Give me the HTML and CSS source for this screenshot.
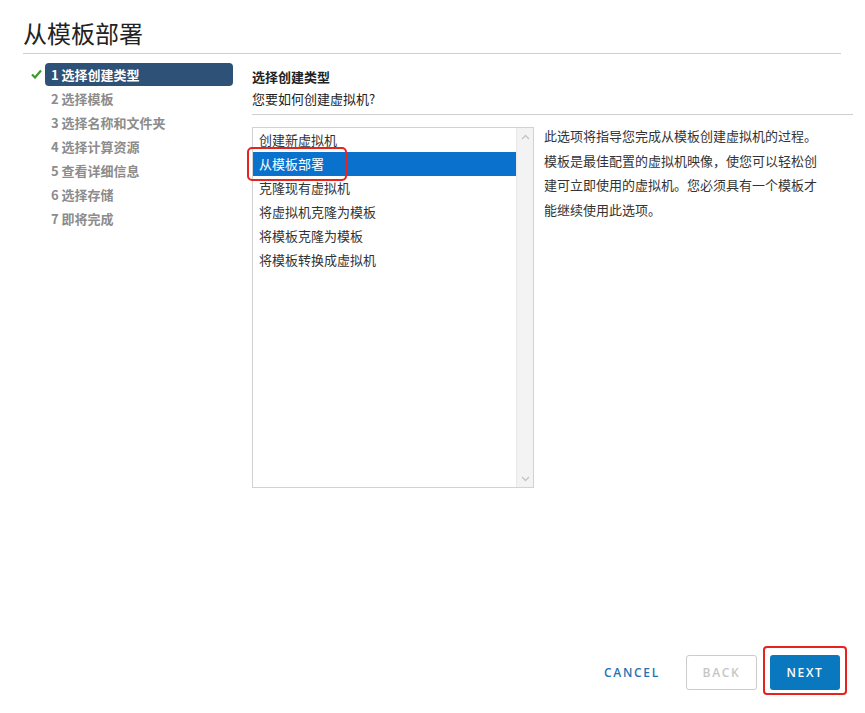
FILE: index.html
```html
<!DOCTYPE html>
<html lang="zh-CN">
<head>
  <meta charset="UTF-8" />
  <title>从模板部署</title>
  <link rel="stylesheet" href="styles.css">
</head>
<body>
  <div class="dialog">
    <div class="dialog-header">
      <h1>从模板部署</h1>
    </div>

    <div class="dialog-body">
      <ul class="steps">
        <li class="step done active">
          <svg class="check" width="11" height="10" viewBox="0 0 11 10"><path d="M1 5.5 L4 8.5 L10 1.5" fill="none" stroke="#3c9a2e" stroke-width="2.2"/></svg>
          <span class="step-label">1 选择创建类型</span>
        </li>
        <li class="step"><span class="step-label">2 选择模板</span></li>
        <li class="step"><span class="step-label">3 选择名称和文件夹</span></li>
        <li class="step"><span class="step-label">4 选择计算资源</span></li>
        <li class="step"><span class="step-label">5 查看详细信息</span></li>
        <li class="step"><span class="step-label">6 选择存储</span></li>
        <li class="step"><span class="step-label">7 即将完成</span></li>
      </ul>

      <div class="content">
        <div class="content-title">选择创建类型</div>
        <div class="content-sub">您要如何创建虚拟机?</div>

        <div class="content-main">
          <div class="listbox">
            <ul class="options">
              <li>创建新虚拟机</li>
              <li class="selected">从模板部署<span class="mark"></span></li>
              <li>克隆现有虚拟机</li>
              <li>将虚拟机克隆为模板</li>
              <li>将模板克隆为模板</li>
              <li>将模板转换成虚拟机</li>
            </ul>
            <div class="scrollbar">
              <svg width="9" height="6" viewBox="0 0 9 6"><path d="M1 5 L4.5 1.5 L8 5" fill="none" stroke="#c4c4c4" stroke-width="1.3"/></svg>
              <svg width="9" height="6" viewBox="0 0 9 6"><path d="M1 1 L4.5 4.5 L8 1" fill="none" stroke="#c4c4c4" stroke-width="1.3"/></svg>
            </div>
          </div>
          <p class="description">此选项将指导您完成从模板创建虚拟机的过程。模板是最佳配置的虚拟机映像，使您可以轻松创建可立即使用的虚拟机。您必须具有一个模板才能继续使用此选项。</p>
        </div>
      </div>
    </div>

    <div class="dialog-footer">
      <button class="btn btn-link">CANCEL</button>
      <button class="btn btn-outline" disabled>BACK</button>
      <span class="next-wrap"><button class="btn btn-primary">NEXT</button></span>
    </div>
  </div>
</body>
</html>
```

FILE: styles.css
```css
body {
  margin: 0;
  background: #fff;
  font-family: "Noto Sans CJK SC", "Noto Sans", sans-serif;
  color: #333;
}

.dialog {
  width: 865px;
  height: 713px;
  box-sizing: border-box;
  padding: 0 24px 0 23px;
  display: flex;
  flex-direction: column;
}

.dialog-header {
  border-bottom: 1px solid #cfcfcf;
  height: 54px;
  box-sizing: border-box;
}

h1 {
  margin: 0;
  padding-top: 16px;
  font-size: 24px;
  font-weight: 400;
  line-height: 34px;
  color: #222;
}

.dialog-body {
  flex: 1;
  display: flex;
  padding-top: 8px;
}

.steps {
  list-style: none;
  margin: 0;
  padding: 0;
  width: 210px;
  flex-shrink: 0;
}

.step {
  display: flex;
  align-items: center;
  height: 24px;
  padding-left: 22px;
  position: relative;
}

.check {
  position: absolute;
  left: 8px;
  top: 7px;
}

.step-label {
  flex: 1;
  height: 23px;
  line-height: 23px;
  padding-left: 6px;
  font-size: 13px;
  font-weight: 700;
  color: #8c8c8c;
  border-radius: 4px;
}

.step.active .step-label {
  background: #2d5177;
  color: #fff;
}

.content {
  flex: 1;
  padding-left: 19px;
  margin-right: -12px;
}

.content-title {
  font-size: 13px;
  font-weight: 700;
  color: #222;
  line-height: 18px;
  margin-top: 6px;
}

.content-sub {
  font-size: 13px;
  color: #222;
  line-height: 18px;
  margin-top: 4px;
  padding-bottom: 6px;
  border-bottom: 1px solid #cfcfcf;
}

.content-main {
  display: flex;
  margin-top: 12px;
}

.listbox {
  width: 282px;
  height: 361px;
  box-sizing: border-box;
  border: 1px solid #d2d2d2;
  display: flex;
}

.options {
  list-style: none;
  margin: 0;
  padding: 0;
  flex: 1;
}

.options li {
  position: relative;
  height: 24px;
  line-height: 24px;
  padding-left: 6px;
  font-size: 13px;
  color: #333;
}

.options li.selected {
  background: #0a72cc;
  color: #fff;
}

.mark {
  position: absolute;
  left: -6px;
  top: -5px;
  width: 96px;
  height: 30px;
  border: 2px solid #e8221e;
  border-radius: 5px;
}

.scrollbar {
  width: 16px;
  background: #f3f3f3;
  border-left: 1px solid #e8e8e8;
  display: flex;
  flex-direction: column;
  justify-content: space-between;
  align-items: center;
  padding: 6px 0 5px;
}

.description {
  width: 282px;
  margin: -3px 0 0 10px;
  font-size: 13px;
  line-height: 24.5px;
  color: #333;
}

.dialog-footer {
  display: flex;
  justify-content: flex-end;
  align-items: center;
  gap: 12px;
  padding-right: 1px;
  height: 58px;
  margin-bottom: 12px;
}

.btn {
  font-family: "Open Sans", "Liberation Sans", sans-serif;
  font-size: 12px;
  font-weight: 600;
  letter-spacing: 1.7px;
  height: 35px;
  border-radius: 3px;
  box-sizing: border-box;
  padding: 0 12px;
  cursor: pointer;
}

.btn-link {
  background: none;
  border: none;
  color: #1f74b2;
  margin-right: 2px;
}

.btn-outline {
  width: 71px;
  background: #fff;
  border: 1px solid #cccccc;
  color: #c6c6c6;
}

.next-wrap {
  position: relative;
  margin-left: 1px;
}

.next-wrap::after {
  content: "";
  position: absolute;
  top: -9px;
  bottom: -5px;
  left: -7px;
  right: -7px;
  border: 2px solid #e8221e;
  border-radius: 4px;
}

.btn-primary {
  display: block;
  width: 70px;
  background: #0a78be;
  border: none;
  color: #fff;
}
```
